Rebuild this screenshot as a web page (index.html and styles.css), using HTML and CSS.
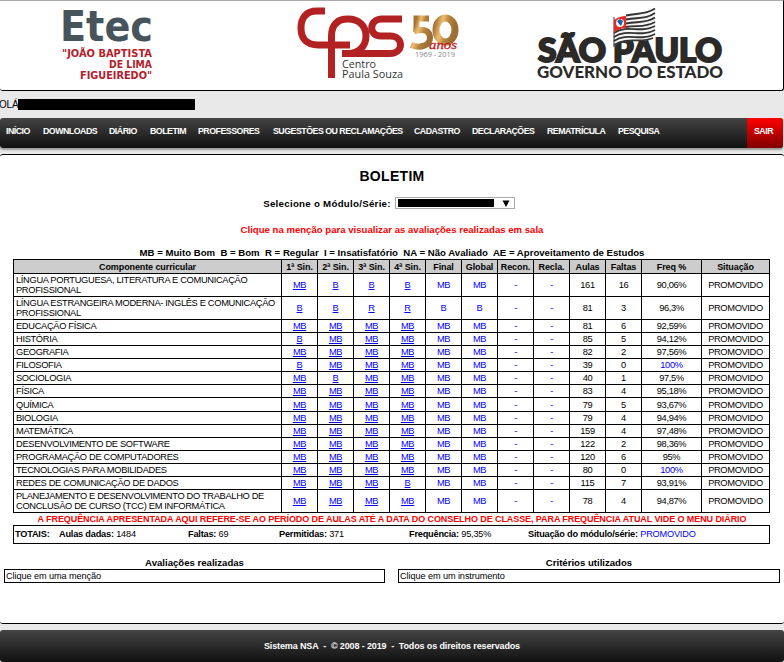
FILE: index.html
```html
<!DOCTYPE html>
<html lang="pt-BR">
<head>
<meta charset="utf-8">
<title>NSA - Boletim</title>
<link rel="stylesheet" href="styles.css">
</head>
<body>
<header class="header">
<svg width="783" height="89" viewBox="0 1 783 89">
<defs>
<linearGradient id="gold" x1="0" x2="1" y1="0" y2="0.3"><stop offset="0" stop-color="#a57435"/><stop offset=".35" stop-color="#efbd70"/><stop offset=".65" stop-color="#b78340"/><stop offset="1" stop-color="#9d6e33"/></linearGradient>
</defs>
<text x="60" y="41" class="etec" textLength="93" lengthAdjust="spacingAndGlyphs">Etec</text>
<g class="school">
<text x="62" y="57" textLength="90" lengthAdjust="spacingAndGlyphs">"JOÃO BAPTISTA</text>
<text x="109" y="68" textLength="43" lengthAdjust="spacingAndGlyphs">DE LIMA</text>
<text x="80" y="79" textLength="72" lengthAdjust="spacingAndGlyphs">FIGUEIREDO"</text>
</g>
<g fill="none" stroke="#b22222" stroke-width="7">
<path d="M325 11H317C306 11 301 18 301 28C301 39 307 45 318 45H350"/>
<path d="M331.500 78V36C331.500 25 337 19 348 19C359 19 366 26 366 36C366 46 359 53.500 348 53.500H342"/>
<path d="M402 19H382C369 19 368 36 381 36H390C404 36 404 53.500 390 53.500H342"/>
</g>
<text x="342" y="68" class="centro" textLength="34" lengthAdjust="spacingAndGlyphs">Centro</text>
<text x="342" y="77.500" class="centro" textLength="61" lengthAdjust="spacingAndGlyphs">Paula Souza</text>
<g fill="none" stroke="url(#gold)">
<path stroke-width="6" d="M429 18.500H416.500V32"/>
<path stroke-width="6" d="M414 31.500C424 28 430 31 430 38C430 45 421 49 411 45"/>
<ellipse cx="445.500" cy="30" rx="9.500" ry="12" stroke-width="7"/>
</g>
<text x="429" y="49" class="anos" textLength="28" lengthAdjust="spacingAndGlyphs">anos</text>
<text x="415" y="57" class="years" textLength="40" lengthAdjust="spacingAndGlyphs">1969 - 2019</text>
<text x="538" y="61.500" class="sp" textLength="68" lengthAdjust="spacingAndGlyphs">SÃO</text>
<text x="613" y="61.500" class="sp" textLength="109" lengthAdjust="spacingAndGlyphs">PAULO</text>
<text x="537" y="77.500" class="gov" textLength="186" lengthAdjust="spacingAndGlyphs">GOVERNO DO ESTADO</text>
<path fill="#f4f4f4" d="M613.500 19C628 11 640 18 655 8V35C648 44 636 40 628 41Q619 41 613.500 47Z"/>
<g fill="none" stroke="#333" stroke-width="1.800">
<path d="M626 15.500C637 13 645 15 655 8.500M626 19.500C637 17 645 20 655 13M626 23.500C637 21 645 24 655 17.500M626 27C637 25 645 28 655 22M614 33C628 24 640 34 655 26M614 37C628 28 640 38 655 30M614 41C628 32 640 42 655 34M614 45C628 36 640 44 653 38"/>
<path stroke-width="1" d="M614 17V47"/>
</g>
<path fill="#e62b20" d="M614 20Q620 16 626 16V28Q619 28 614 33Z"/>
<circle cx="620" cy="23" r="4" fill="#fff"/><path fill="#1760a8" d="M617 21l3-2 3 2-2 5-2-2z"/>
</svg>
</header>
<div class="greeting">OLÁ<span class="redacted"></span></div>
<nav class="nav">
<a>INÍCIO</a><a>DOWNLOADS</a><a>DIÁRIO</a><a>BOLETIM</a><a>PROFESSORES</a><a>SUGESTÕES OU RECLAMAÇÕES</a><a>CADASTRO</a><a>DECLARAÇÕES</a><a>REMATRÍCULA</a><a>PESQUISA</a><a class="exit">SAIR</a>
</nav>
<main class="panel">
<h1>BOLETIM</h1>
<div class="selector"><span>Selecione o Módulo/Série:</span><div class="select"><i></i><svg width="8" height="7" viewBox="0 0 8 7"><path d="M0.500 0.500h7L4 7z"/></svg></div></div>
<p class="hint">Clique na menção para visualizar as avaliações realizadas em sala</p>
<p class="legend">MB = Muito Bom&nbsp; B = Bom&nbsp; R = Regular&nbsp; I = Insatisfatório&nbsp; NA = Não Avaliado&nbsp; AE = Aproveitamento de Estudos</p>
<table class="grades">
<colgroup><col class="c-name"><col span="10" class="c-sm"><col class="c-freq"><col class="c-sit"></colgroup>
<thead><tr><th>Componente curricular</th><th>1ª Sin.</th><th>2ª Sin.</th><th>3ª Sin.</th><th>4ª Sin.</th><th>Final</th><th>Global</th><th>Recon.</th><th>Recla.</th><th>Aulas</th><th>Faltas</th><th>Freq %</th><th>Situação</th></tr></thead>
<tbody id="rows"></tbody>
</table>
<p class="notice"><span>A FREQUÊNCIA APRESENTADA AQUI REFERE-SE AO PERÍODO DE AULAS ATÉ A DATA DO CONSELHO DE CLASSE, PARA FREQUÊNCIA ATUAL VIDE O MENU DIÁRIO</span></p>
<div class="totals"><b>TOTAIS:</b><span><b>Aulas dadas:</b> 1484</span><span><b>Faltas:</b> 69</span><span><b>Permitidas:</b> 371</span><span><b>Frequência:</b> 95,35%</span><span><b>Situação do módulo/série:</b> <em>PROMOVIDO</em></span></div>
<div class="details">
<section><h2>Avaliações realizadas</h2><div class="box">Clique em uma menção</div></section>
<section><h2>Critérios utilizados</h2><div class="box">Clique em um instrumento</div></section>
</div>
</main>
<footer class="footer">Sistema NSA&nbsp; -&nbsp; © 2008 - 2019&nbsp; -&nbsp; Todos os direitos reservados</footer>
<script src="grades.js"></script>
</body>
</html>
```
FILE: styles.css
```css
* { box-sizing: border-box; }
body { margin: 0; width: 784px; height: 662px; overflow: hidden; background: #e9e9e9; font-family: "Liberation Sans", Arial, sans-serif; font-size: 9px; color: #000; }
h1, h2, p { margin: 0; }
svg { display: block; }
.header { height: 91px; background: #fff; border-top: 1px solid #aaa; border-right: 1px solid #000; border-bottom: 1px solid #000; border-radius: 0 0 3px 3px; }
.etec { font: bold 42px "DejaVu Sans", sans-serif; fill: #48545c; }
.school { font: bold 10px "DejaVu Sans", sans-serif; fill: #b4202a; }
.centro { font: 10px "Open Sans", sans-serif; fill: #333; }
.anos { font: italic 13px "Liberation Serif", serif; fill: #c22026; stroke: #c22026; stroke-width: .3; }
.years { font: 7px "Open Sans", sans-serif; fill: #888; }
.sp { font: 900 32px Lato, sans-serif; fill: #2b2a29; stroke: #2b2a29; stroke-width: 2; }
.gov { font: 900 16px Lato, sans-serif; fill: #2b2a29; }
.greeting { display: flex; align-items: center; height: 27px; padding-bottom: 1px; font-size: 10px; letter-spacing: -.2px; margin-left: -1px; }
.redacted { width: 177px; height: 11px; background: #000; }
.nav { display: grid; grid-template-columns: 37px 66px 41px 48px 75px 141px 58px 75px 71px 1fr 36px; height: 30px; line-height: 26px; padding-left: 6px; background: linear-gradient(#444, #111); border-radius: 3px; box-shadow: 0 2px 2px #999; color: #fff; font-weight: bold; font-size: 8.800px; letter-spacing: -.5px; white-space: nowrap; margin-right: 1px; }
.exit { background: linear-gradient(#f00, #800000); padding-left: 7px; border-radius: 0 3px 3px 0; }
.panel { margin-top: 6px; height: 470px; background: #fff; border: solid #000; border-width: 1px 0; border-radius: 3px; }
h1 { padding-top: 13px; height: 41px; font-size: 14px; line-height: 17px; text-align: center; letter-spacing: .3px; }
.selector { display: flex; align-items: center; justify-content: center; gap: 4px; height: 14px; margin-left: -6px; font-weight: bold; font-size: 9.700px; letter-spacing: .28px; }
.select { display: flex; align-items: center; justify-content: space-between; width: 120px; height: 12px; padding: 0 4px 0 2px; border: 1px solid #aaa; }
.select i { width: 96px; height: 8px; background: #000; }
.hint { margin-top: 13px; height: 13px; line-height: 13px; text-align: center; font-weight: bold; font-size: 9.600px; color: #f00; }
.legend { margin-top: 11px; height: 12px; line-height: 12px; text-align: center; font-weight: bold; font-size: 9.620px; white-space: nowrap; }
.grades { table-layout: fixed; width: 757px; margin-left: 13px; border: solid #000; border-width: 1px 0 0 1px; border-spacing: 0; line-height: 10px; }
.c-name { width: 268px; }
.c-sm { width: 36px; }
.c-freq { width: 60px; }
.c-sit { width: 68px; }
.grades th { height: 14px; background: #ccc; font-size: 9px; letter-spacing: -.1px; }
.grades th, .grades td { padding: 0; border: solid #000; border-width: 0 1px 1px 0; text-align: center; white-space: nowrap; }
.grades td { height: 13px; font-size: 9.300px; letter-spacing: -.35px; }
.grades .mid td { height: 14px; }
.grades .tall td { height: 23px; }
.grades .name { text-align: left; padding-left: 2px; letter-spacing: -.33px; }
.blue { color: #00f; }
.blue u { text-decoration: underline; }
.notice { height: 12px; line-height: 12px; color: #f00; font-weight: bold; font-size: 9px; letter-spacing: -.085px; text-align: center; white-space: nowrap; }
.totals { display: grid; grid-template-columns: 44px 129px 91px 130px 119px 1fr; width: 757px; height: 19px; margin-left: 13px; border: 1px solid #000; padding-left: 1px; line-height: 16px; font-size: 9.200px; letter-spacing: -.2px; white-space: nowrap; }
.totals em { font-style: normal; color: #00f; }
.details { display: flex; gap: 13px; padding: 13px 4px 0; }
.details section { width: 381px; }
.details section + section { width: 382px; }
.details h2 { height: 12px; line-height: 12px; font-size: 9.600px; text-align: center; }
.box { height: 14px; line-height: 12px; border: 1px solid #000; padding-left: 1px; font-size: 9.200px; letter-spacing: -.1px; }
.footer { height: 32px; margin-top: 6px; background: linear-gradient(#444, #111); border-radius: 3px; text-align: center; color: #fff; font-weight: bold; line-height: 32px; letter-spacing: -.13px; }
```
FILE: grades.js
```js
const rows = [
  ["LÍNGUA PORTUGUESA, LITERATURA E COMUNICAÇÃO<br>PROFISSIONAL", "MB B B B MB MB", 161, 16, "90,06%"],
  ["LÍNGUA ESTRANGEIRA MODERNA- INGLÊS E COMUNICAÇÃO<br>PROFISSIONAL", "B B R R B B", 81, 3, "96,3%"],
  ["EDUCAÇÃO FÍSICA", "MB MB MB MB MB MB", 81, 6, "92,59%"],
  ["HISTÓRIA", "B MB MB MB MB MB", 85, 5, "94,12%"],
  ["GEOGRAFIA", "MB MB MB MB MB MB", 82, 2, "97,56%"],
  ["FILOSOFIA", "B MB MB MB MB MB", 39, 0, "100%"],
  ["SOCIOLOGIA", "MB B MB MB MB MB", 40, 1, "97,5%"],
  ["FÍSICA", "MB MB MB MB MB MB", 83, 4, "95,18%"],
  ["QUÍMICA", "MB MB MB MB MB MB", 79, 5, "93,67%"],
  ["BIOLOGIA", "MB MB MB MB MB MB", 79, 4, "94,94%"],
  ["MATEMÁTICA", "MB MB MB MB MB MB", 159, 4, "97,48%"],
  ["DESENVOLVIMENTO DE SOFTWARE", "MB MB MB MB MB MB", 122, 2, "98,36%"],
  ["PROGRAMAÇÃO DE COMPUTADORES", "MB MB MB MB MB MB", 120, 6, "95%"],
  ["TECNOLOGIAS PARA MOBILIDADES", "MB MB MB MB MB MB", 80, 0, "100%"],
  ["REDES DE COMUNICAÇÃO DE DADOS", "MB MB MB B MB MB", 115, 7, "93,91%"],
  ["PLANEJAMENTO E DESENVOLVIMENTO DO TRABALHO DE<br>CONCLUSÃO DE CURSO (TCC) EM INFORMÁTICA", "MB MB MB MB MB MB", 78, 4, "94,87%"]
];
document.getElementById("rows").innerHTML = rows.map(([name, marks, classes, absences, freq]) => {
  const size = name.includes("<br>") ? "tall" : name === "QUÍMICA" ? "mid" : "";
  const cells = marks.split(" ").map((m, i) => `<td class="blue">${i < 4 ? `<u>${m}</u>` : m}</td>`).join("");
  return `<tr class="${size}"><td class="name">${name}</td>${cells}<td class="blue">-</td><td class="blue">-</td><td>${classes}</td><td>${absences}</td><td class="${freq === "100%" ? "blue" : ""}">${freq}</td><td>PROMOVIDO</td></tr>`;
}).join("");
```
